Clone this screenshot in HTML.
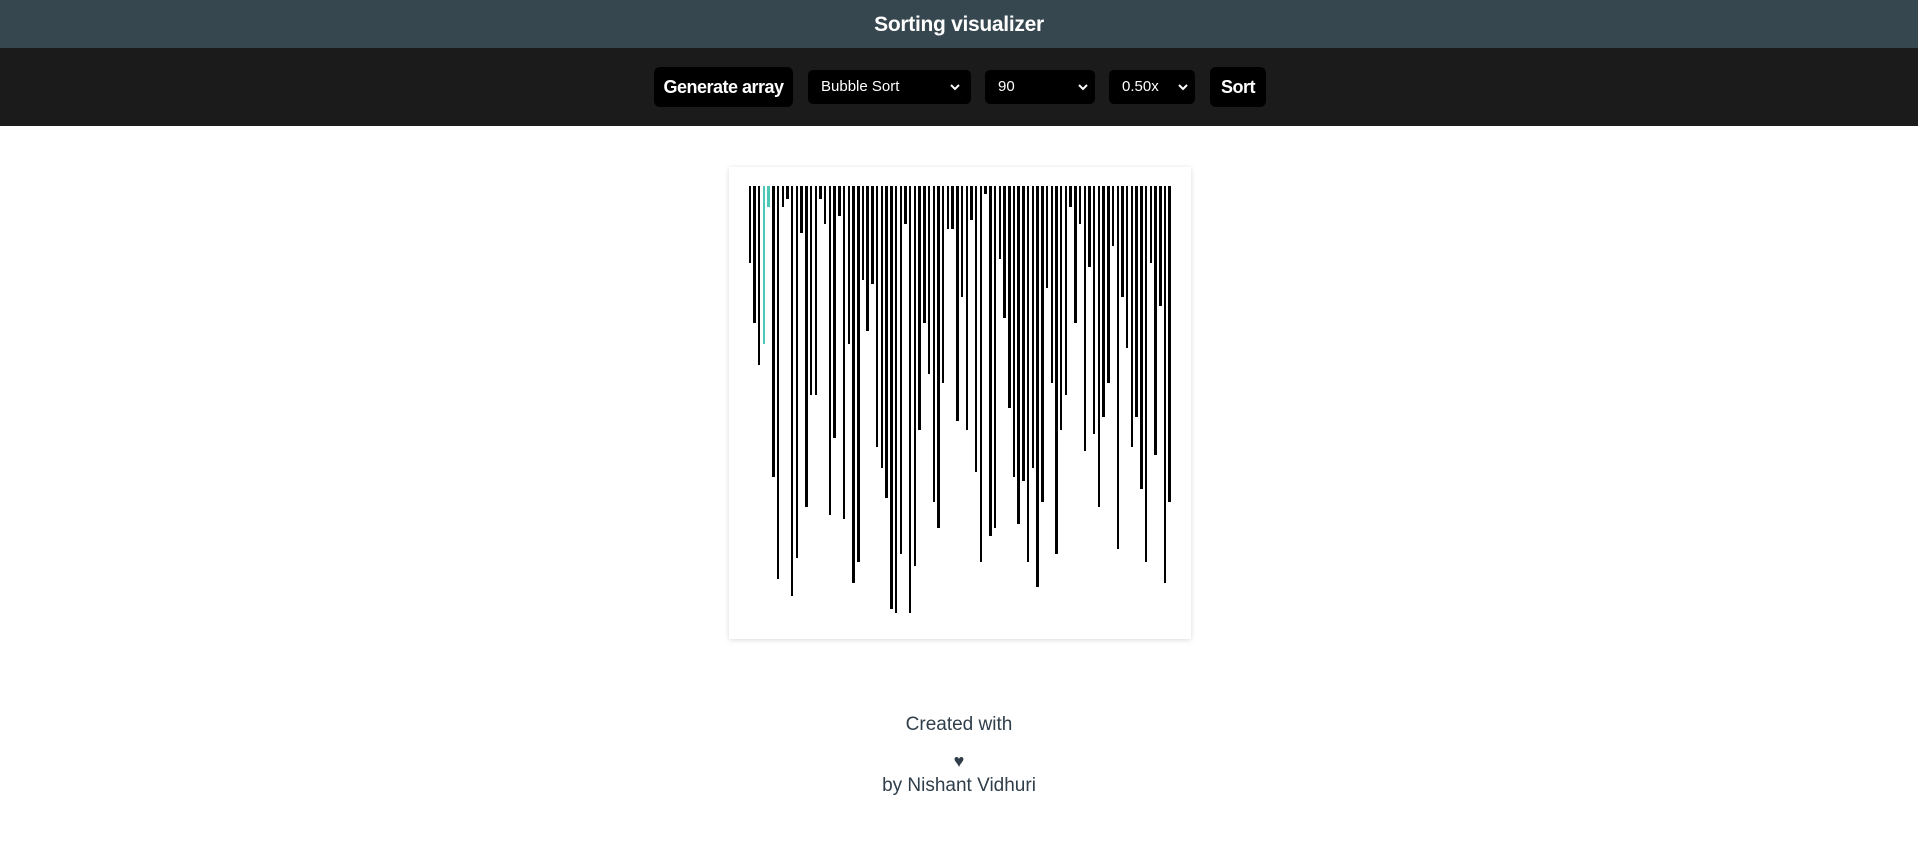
<!DOCTYPE html>
<html><head><meta charset="utf-8"><style>
*{box-sizing:border-box;margin:0;padding:0}
body{width:1918px;height:866px;background:#fff;font-family:"Liberation Sans",sans-serif;position:relative;overflow:hidden}
.hdr{position:absolute;left:0;top:0;width:1918px;height:48px;background:#37474f;color:#fff;font-weight:bold;font-size:21px;text-align:center;line-height:50px;letter-spacing:-0.3px}
.bar{position:absolute;left:0;top:48px;width:1918px;height:78px;background:#1b1b1b}
.btn{position:absolute;background:#000;color:#fff;font-weight:bold;border-radius:6px;font-size:18px;top:19px;height:40px;line-height:40px;text-align:center;letter-spacing:-0.5px}
.sel{position:absolute;background:#000;color:#fff;border-radius:5px;font-size:15px;top:22px;height:34px;line-height:34px;padding-left:13px}
.sel svg{position:absolute;top:13px}
.chart{position:absolute;left:729px;top:167px;width:462px;height:472px;background:#fff;box-shadow:0 1px 5px rgba(0,0,0,.15)}
.b{position:absolute;top:186px;background:#000}
.ft{position:absolute;left:0;width:1918px;text-align:center;color:#2f3e4a;font-size:19px}
</style></head><body>
<div class="hdr">Sorting visualizer</div>
<div class="bar">
<div class="btn" style="left:654px;width:139px">Generate array</div>
<div class="sel" style="left:808px;width:163px">Bubble Sort<svg style="left:141px" width="12" height="8" viewBox="0 0 12 8"><path d="M2 2l4 4 4-4" stroke="#fff" stroke-width="2" fill="none"/></svg></div>
<div class="sel" style="left:985px;width:110px">90<svg style="left:92px" width="12" height="8" viewBox="0 0 12 8"><path d="M2 2l4 4 4-4" stroke="#fff" stroke-width="2" fill="none"/></svg></div>
<div class="sel" style="left:1109px;width:86px">0.50x<svg style="left:68px" width="12" height="8" viewBox="0 0 12 8"><path d="M2 2l4 4 4-4" stroke="#fff" stroke-width="2" fill="none"/></svg></div>
<div class="btn" style="left:1210px;width:56px">Sort</div>
</div>
<div class="chart"></div>
<div class="ft" style="top:714px">Created with</div>
<div class="ft" style="top:751px;font-size:18px">&#9829;</div>
<div class="ft" style="top:775px">by Nishant Vidhuri</div>
<script>
var z1=[[60,0,308],[72,1,488],[87,0,614],[102,0,551],[114,1,140],[129,1,950],[145,0,1256],[159,0,140],[171,1,116],[186,0,1307],[201,0,1193],[213,1,218],[228,1,1040],[243,0,704],[258,0,704],[270,1,116],[285,0,191],[300,0,1064],[312,1,833],[327,1,167],[342,0,1076],[357,0,551],[369,1,1268],[384,1,1205],[399,0,359],[411,1,512],[426,1,371],[441,0,860],[456,0,923],[468,1,1013],[483,1,1346],[498,0,1358],[513,0,1181],[525,1,191],[540,0,1358],[555,0,1217],[567,1,809],[582,1,488],[597,0,641],[612,0,1025],[624,1,1103],[639,0,668],[654,0,206],[666,1,206],[681,1,782],[696,0,410],[711,0,809]];
var z2=[[30,1,179],[45,0,935],[60,0,1205],[72,1,101],[87,1,1127],[102,0,1103],[117,0,296],[129,1,473],[144,1,743],[159,0,950],[171,1,1091],[186,1,962],[201,0,1205],[216,0,923],[228,1,1282],[243,1,1025],[258,0,383],[273,0,668],[285,1,1181],[300,0,809],[315,0,704],[327,1,140],[342,1,488],[357,0,191],[372,0,872],[384,1,320],[399,0,821],[414,0,1040],[426,1,770],[441,1,668],[456,0,257],[471,0,1166],[483,1,410],[498,0,563],[513,0,860],[525,1,770],[540,1,986],[555,0,1205],[570,0,308],[582,1,884],[597,1,437],[612,0,1268],[624,1,1025]];
var h='';
function add(arr,ox,i0){arr.forEach(function(a,i){var x=ox+a[0]/3,w=a[1]?3:2,hh=(a[2]-78)/3;var c=(i0+i==3||i0+i==4)?'#4fc9b5':'#000';h+='<div class="b" style="left:'+x.toFixed(1)+'px;width:'+w+'px;height:'+hh.toFixed(1)+'px;background:'+c+'"></div>';});}
add(z1,729,0);add(z2,960,100);
document.body.insertAdjacentHTML('beforeend',h);
</script>
</body></html>
